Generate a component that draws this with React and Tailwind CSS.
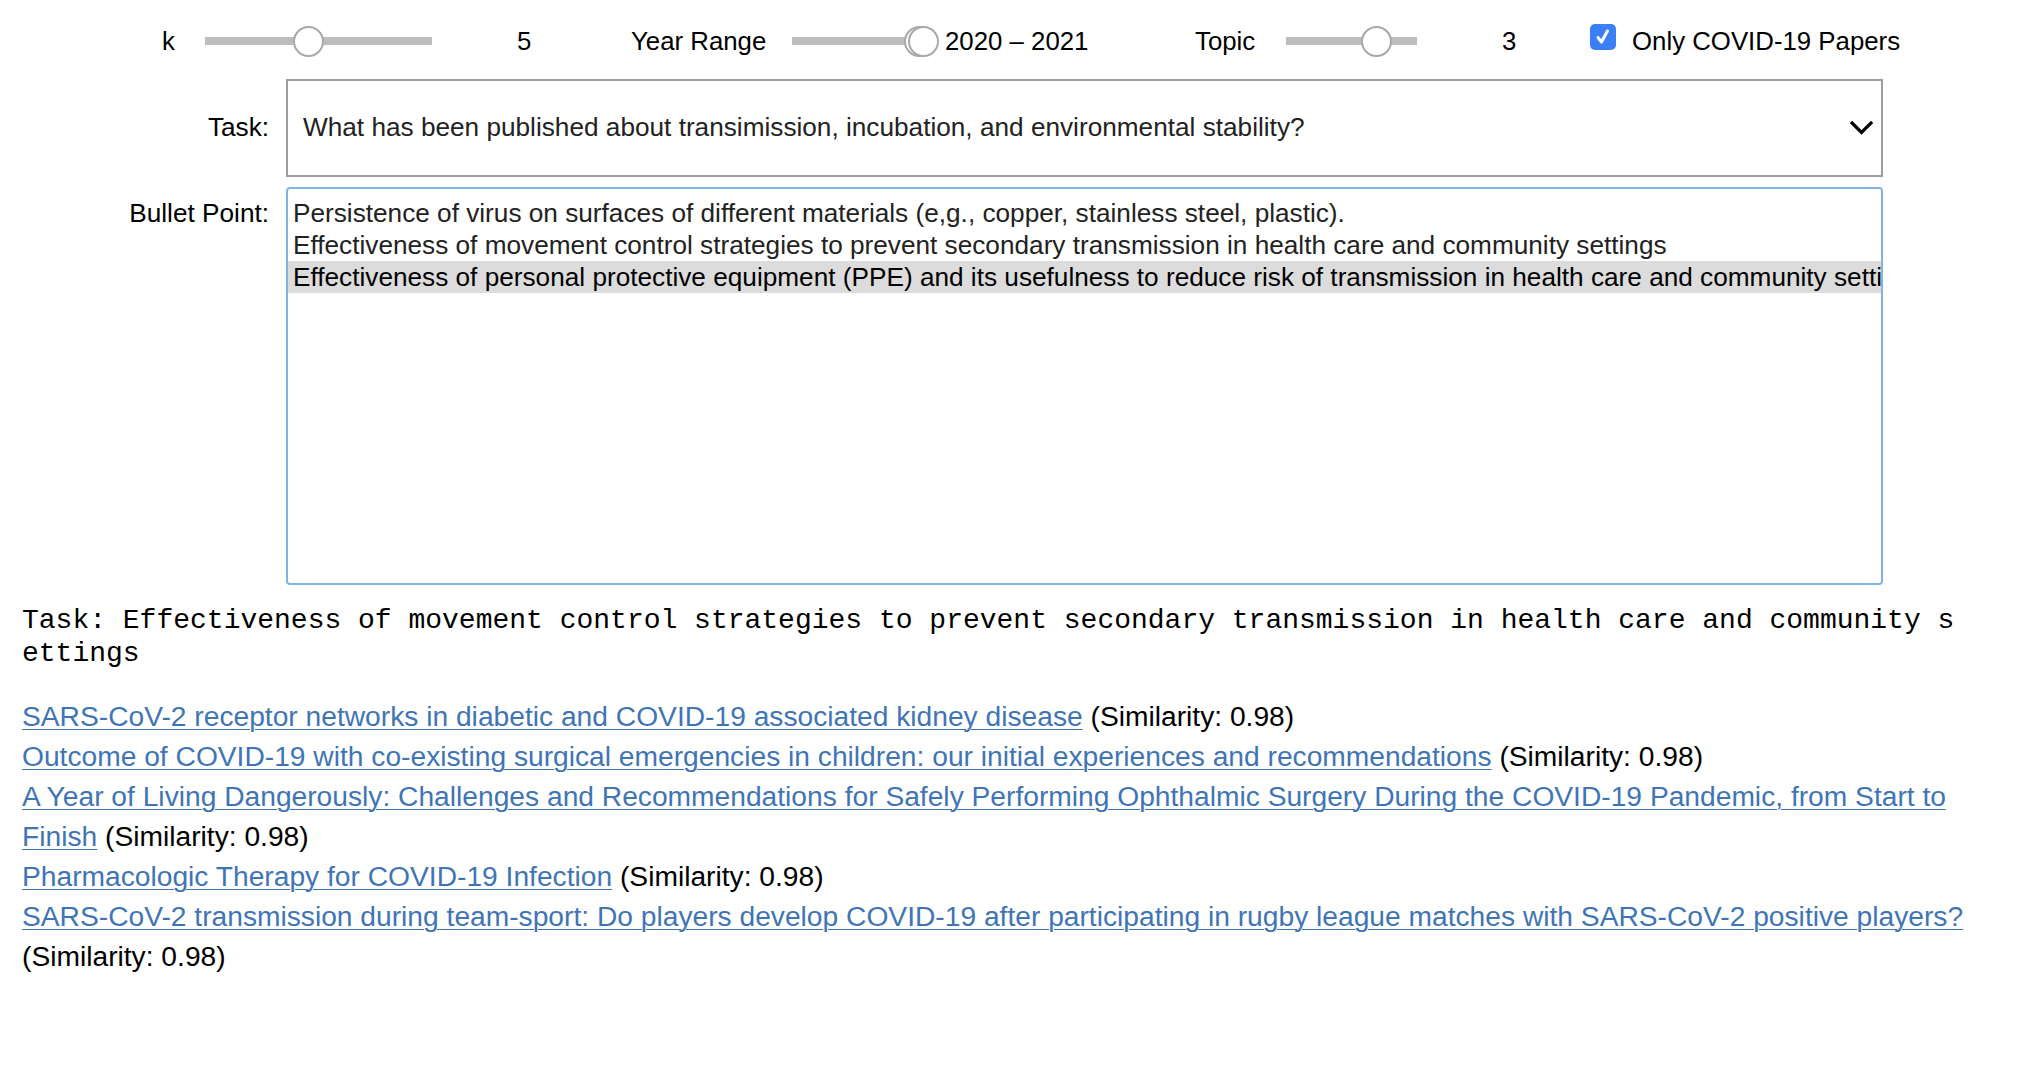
import React from "react";

const bulletPoints = [
  "Persistence of virus on surfaces of different materials (e,g., copper, stainless steel, plastic).",
  "Effectiveness of movement control strategies to prevent secondary transmission in health care and community settings",
  "Effectiveness of personal protective equipment (PPE) and its usefulness to reduce risk of transmission in health care and community settings",
];

const papers = [
  "SARS-CoV-2 receptor networks in diabetic and COVID-19 associated kidney disease",
  "Outcome of COVID-19 with co-existing surgical emergencies in children: our initial experiences and recommendations",
  "A Year of Living Dangerously: Challenges and Recommendations for Safely Performing Ophthalmic Surgery During the COVID-19 Pandemic, from Start to Finish",
  "Pharmacologic Therapy for COVID-19 Infection",
  "SARS-CoV-2 transmission during team-sport: Do players develop COVID-19 after participating in rugby league matches with SARS-CoV-2 positive players?",
];

const Thumb = ({ className }) => (
  <div
    className={`absolute top-0 h-[31px] w-[31px] rounded-full border-2 border-[#a8a8a8] bg-white ${className}`}
  />
);

const Slider = ({ className, trackClass, children }) => (
  <div className={`relative h-[31px] shrink-0 ${className}`}>
    <div className={`absolute left-0 top-[11.5px] h-[8px] bg-[#bdbdbd] ${trackClass}`} />
    {children}
  </div>
);

const Check = () => (
  <div className="mb-[8px] flex h-[26px] w-[26px] shrink-0 items-center justify-center rounded-[5px] bg-[#3a7ff6]">
    <svg width="16" height="18" viewBox="0 0 16 18" fill="none">
      <path d="M3 9.5 L6.5 14 L12.5 3" stroke="white" strokeWidth="3" strokeLinecap="round" strokeLinejoin="round" />
    </svg>
  </div>
);

const Controls = () => (
  <div className="flex h-[79px] items-center pt-[3px] text-[25.8px] text-black">
    <div className="w-[205px] shrink-0 pl-[162px]">k</div>
    <Slider className="w-[227px]" trackClass="w-[227px]">
      <Thumb className="left-[88px]" />
    </Slider>
    <div className="w-[199px] shrink-0 pl-[85px]">5</div>
    <div className="w-[161px] shrink-0">Year Range</div>
    <Slider className="w-[153px]" trackClass="w-[128px]">
      <Thumb className="left-[112px]" />
      <Thumb className="left-[116px]" />
    </Slider>
    <div className="w-[250px] shrink-0">2020 – 2021</div>
    <div className="w-[91px] shrink-0">Topic</div>
    <Slider className="w-[131px]" trackClass="w-[131px]">
      <Thumb className="left-[75px]" />
    </Slider>
    <div className="w-[173px] shrink-0 pl-[85px]">3</div>
    <Check />
    <div className="ml-[16px] shrink-0">Only COVID-19 Papers</div>
  </div>
);

const TaskSelect = () => (
  <div className="flex items-center text-[26.2px]">
    <div className="w-[286px] shrink-0 pr-[17px] text-right text-black">Task:</div>
    <div className="flex h-[98px] w-[1597px] shrink-0 items-center justify-between border-2 border-[#9e9e9e] pl-[15px] pr-[8px] text-[#222]">
      <span>What has been published about transimission, incubation, and environmental stability?</span>
      <svg width="23" height="14" viewBox="0 0 23 14" fill="none">
        <path d="M2 2 L11.5 11.5 L21 2" stroke="black" strokeWidth="3.2" strokeLinecap="square" />
      </svg>
    </div>
  </div>
);

const BulletList = () => (
  <div className="mt-[10px] flex items-start text-[26.2px]">
    <div className="w-[286px] shrink-0 pr-[17px] pt-[10px] text-right leading-[32px] text-black">
      Bullet Point:
    </div>
    <div className="h-[398px] w-[1597px] shrink-0 overflow-hidden rounded-[4px] border-2 border-[#80b4e6] pt-[8px]">
      {bulletPoints.map((text, i) => (
        <div
          key={text}
          className={
            i === 2
              ? "h-[32px] overflow-hidden whitespace-nowrap bg-[#dcdcdc] pl-[5px] leading-[32px] text-black"
              : "h-[32px] overflow-hidden whitespace-nowrap pl-[5px] leading-[32px] text-[#222]"
          }
        >
          {text}
        </div>
      ))}
    </div>
  </div>
);

const Results = () => (
  <div className="ml-[22px]">
    <div className="mt-[19px] w-[115.5ch] break-all font-['Liberation_Mono',monospace] text-[28px] leading-[33px] text-black">
      Task: Effectiveness of movement control strategies to prevent secondary transmission in health care and community settings
    </div>
    <div className="mt-[26px] w-[1976px] text-[28.2px] leading-[40px] text-black">
      {papers.map((title) => (
        <div key={title}>
          <a href="#" className="text-[#3f75b5] underline decoration-1 underline-offset-[3px]">
            {title}
          </a>{" "}
          (Similarity: 0.98)
        </div>
      ))}
    </div>
  </div>
);

export default function App() {
  return (
    <div className="min-h-[1068px] w-[2020px] bg-white font-['Liberation_Sans',Arial,sans-serif]">
      <Controls />
      <TaskSelect />
      <BulletList />
      <Results />
    </div>
  );
}
